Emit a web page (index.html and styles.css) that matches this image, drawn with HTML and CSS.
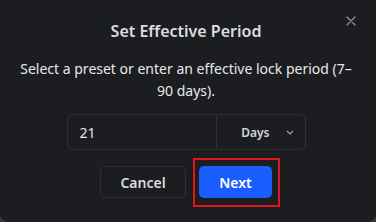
FILE: index.html
```html
<!DOCTYPE html>
<html lang="en">
<head>
  <meta charset="UTF-8" />
  <meta name="viewport" content="width=device-width, initial-scale=1" />
  <title>Set Effective Period</title>
  <link rel="stylesheet" href="styles.css">
</head>
<body>

  <div class="modal">
    <button class="modal-close" aria-label="Close">
      <svg width="10" height="10" viewBox="0 0 10 10">
        <path d="M1 1 L9 9 M9 1 L1 9" stroke="currentColor" stroke-width="1.4" stroke-linecap="round" fill="none" />
      </svg>
    </button>

    <h2 class="modal-title">Set Effective Period</h2>
    <p class="modal-text">Select a preset or enter an effective lock period (7–90 days).</p>

    <div class="period-field">
      <input type="text" class="period-input" value="21" />
      <div class="period-unit">
        <span>Days</span>
        <svg width="8" height="5" viewBox="0 0 8 5">
          <path d="M1 1 L4 4 L7 1" stroke="currentColor" stroke-width="1.2" fill="none" />
        </svg>
      </div>
    </div>

    <div class="modal-actions">
      <button class="btn btn-cancel">Cancel</button>
      <button class="btn btn-next highlight">Next</button>
    </div>
  </div>

</body>
</html>
```

FILE: styles.css
```css
body {
  margin: 0;
  background-color: #3a3b40;
  font-family: "Noto Sans", "Open Sans", sans-serif;
}

.modal {
  position: relative;
  width: 376px;
  height: 222px;
  box-sizing: border-box;
  padding: 19px 22px 0 18px;
  background: #1c1d21;
  border-radius: 0 0 8px 8px;
  text-align: center;
}

.modal-close {
  position: absolute;
  top: 14px;
  right: 20px;
  padding: 0;
  border: none;
  background: none;
  color: #8a8b91;
  cursor: pointer;
}

.modal-title {
  margin: 0;
  font-size: 16px;
  line-height: 24px;
  font-weight: 600;
  color: #dcdcde;
}

.modal-text {
  margin: 15px 0 0;
  font-size: 14px;
  line-height: 22px;
  color: #e8e8ea;
}

.period-field {
  display: flex;
  width: 239px;
  height: 36px;
  margin: 12px auto 0;
  box-sizing: border-box;
  border: 1px solid #2e3035;
  border-radius: 6px;
}

.period-input {
  flex: 1;
  min-width: 0;
  padding: 0 12px;
  border: none;
  border-right: 1px solid #2e3035;
  background: none;
  color: #e6e6e8;
  font-family: inherit;
  font-size: 14px;
  outline: none;
}

.period-unit {
  display: flex;
  align-items: center;
  justify-content: flex-end;
  gap: 16px;
  width: 88px;
  padding-right: 11px;
  box-sizing: border-box;
  font-size: 12px;
  font-weight: 600;
  color: #d6d6d8;
}

.period-unit svg {
  color: #a0a1a6;
}

.modal-actions {
  display: flex;
  justify-content: center;
  gap: 13px;
  margin-top: 16px;
}

.btn {
  height: 32px;
  border-radius: 5px;
  font-family: inherit;
  font-size: 14px;
  font-weight: 600;
  cursor: pointer;
}

.btn-cancel {
  width: 86px;
  border: 1px solid #2e3035;
  background: #1c1d21;
  color: #dcdcde;
}

.btn-next {
  position: relative;
  width: 73px;
  border: none;
  background: #1b5cff;
  color: #ffffff;
}

.highlight::after {
  content: "";
  position: absolute;
  top: -8px;
  right: -8px;
  bottom: -9px;
  left: -6px;
  border: 2px solid #e0161b;
}
```
